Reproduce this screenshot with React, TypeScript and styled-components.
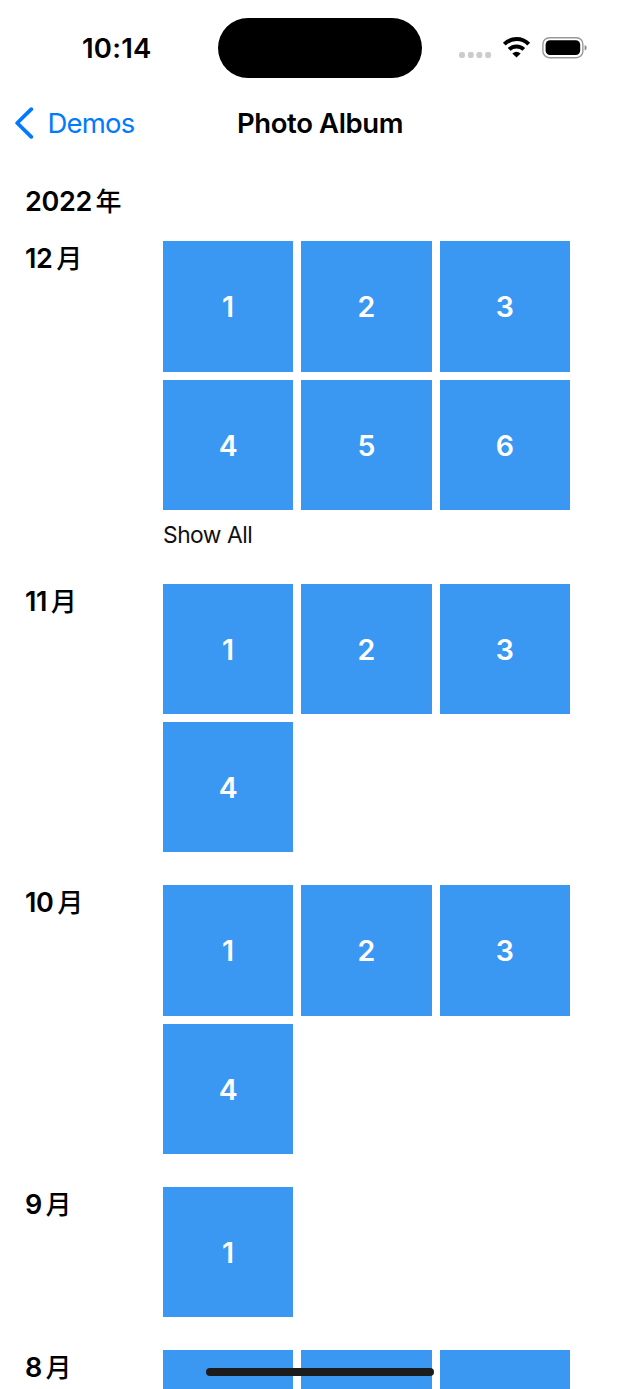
import React from "react";
import styled, { createGlobalStyle } from "styled-components";

const GlobalStyle = createGlobalStyle`
  * { box-sizing: border-box; }
  html, body { margin: 0; background: #fff; overflow: hidden; }
  body {
    font-family: Inter, "Noto Sans CJK SC", sans-serif;
    color: #000;
  }
`;

const Screen = styled.div`
  position: relative;
  width: 640px;
  height: 1389px;
  overflow: hidden;
  background: #fff;
`;

const StatusBar = styled.header`
  display: grid;
  grid-template-columns: 218px 204px 218px;
  height: 96px;
`;

const Clock = styled.div`
  padding: 31px 0 0 82px;
  font-size: 27.5px;
  line-height: 34px;
  font-weight: 600;
  letter-spacing: 0.2px;
`;

const Island = styled.div`
  margin-top: 18px;
  height: 60px;
  border-radius: 30px;
  background: #000;
`;

const Indicators = styled.div`
  display: flex;
  align-items: flex-start;
  padding: 34px 0 0 32px;
`;

const NavBar = styled.nav`
  display: grid;
  grid-template-columns: 190px 260px 190px;
  align-items: center;
  height: 54px;
  line-height: 34px;
`;

const BackButton = styled.button`
  display: flex;
  align-items: center;
  gap: 13.5px;
  padding: 0 0 0 14px;
  border: 0;
  background: none;
  color: #007aff;
  font: 400 27.5px/34px Inter, sans-serif;
  letter-spacing: -0.8px;
`;

const Title = styled.h1`
  margin: 0;
  text-align: center;
  font-size: 27.5px;
  line-height: 34px;
  font-weight: 600;
  letter-spacing: -0.4px;
`;

const Album = styled.main`
  padding: 33.5px 0 0 25px;
`;

const Label = styled.h2`
  display: flex;
  gap: 3.5px;
  margin: 0;
  font-size: 27px;
  line-height: 35px;
  font-weight: 600;
  letter-spacing: -0.3px;
`;

const Unit = styled.span`
  margin-top: -2px;
  font-family: "Noto Sans CJK SC", sans-serif;
  font-weight: 500;
  font-size: 26px;
  letter-spacing: 0;
`;

const MonthList = styled.div`
  display: flex;
  flex-direction: column;
  gap: 32.8px;
  margin-top: 22.8px;
`;

const MonthRow = styled.section`
  display: grid;
  grid-template-columns: 138px 407px;
`;

const Tiles = styled.div`
  display: grid;
  grid-template-columns: repeat(3, 130.25px);
  grid-auto-rows: 130.3px;
  gap: 8.2px 8.14px;
`;

const Tile = styled.div`
  display: flex;
  align-items: center;
  justify-content: center;
  padding-top: 1px;
  background: #3a98f3;
  color: #fff;
  font-size: 28.5px;
  font-weight: 600;
`;

const ShowAll = styled.button`
  display: block;
  height: 40.8px;
  padding: 9px 0 0;
  border: 0;
  background: none;
  color: #111;
  font: 400 22.8px/32px Inter, sans-serif;
  letter-spacing: -0.5px;
`;

const HomeIndicator = styled.div`
  position: absolute;
  left: 206px;
  top: 1368px;
  width: 228px;
  height: 8px;
  border-radius: 4px;
  background: #1c1c1c;
`;

const months = [
  { month: 12, count: 6, more: true },
  { month: 11, count: 4 },
  { month: 10, count: 4 },
  { month: 9, count: 1 },
  { month: 8, count: 3 },
];

function StatusIcons() {
  return (
    <svg width="134" height="28" viewBox="0 0 134 28">
      <g fill="#cccccc">
        <rect x="5" y="18" width="6" height="6" rx="2.2" />
        <rect x="13.8" y="18" width="6" height="6" rx="2.2" />
        <rect x="22.4" y="18" width="6" height="6" rx="2.2" />
        <rect x="31.1" y="18" width="6" height="6" rx="2.2" />
      </g>
      <g fill="none" stroke="#000" strokeWidth="4">
        <path d="M50.3 10.1A17.4 17.4 0 0 1 74.7 10.1" />
        <path d="M55.2 15.4A10.5 10.5 0 0 1 69.8 15.4" />
      </g>
      <path d="M62.5 23.6L58.3 19.5Q62.5 15.8 66.7 19.5Z" />
      <rect x="88.9" y="3.7" width="40" height="20" rx="6.5" fill="none" stroke="#999" strokeWidth="1.4" />
      <rect x="91.6" y="6.3" width="34.6" height="14.8" rx="4.5" />
      <path d="M130.6 10.9Q132.7 11.7 132.7 13.7Q132.7 15.7 130.6 16.5Z" fill="#888" />
    </svg>
  );
}

export default function App() {
  return (
    <Screen>
      <GlobalStyle />
      <StatusBar>
        <Clock>10:14</Clock>
        <Island />
        <Indicators>
          <StatusIcons />
        </Indicators>
      </StatusBar>
      <NavBar>
        <BackButton>
          <svg width="20" height="32" viewBox="0 0 20 32">
            <path
              d="M17.3 2.2L3.2 16L17.3 29.8"
              fill="none"
              stroke="#007aff"
              strokeWidth="3.8"
              strokeLinecap="round"
              strokeLinejoin="round"
            />
          </svg>
          Demos
        </BackButton>
        <Title>Photo Album</Title>
      </NavBar>
      <Album>
        <Label>
          2022<Unit>年</Unit>
        </Label>
        <MonthList>
          {months.map(({ month, count, more }) => (
            <MonthRow key={month}>
              <Label>
                {month}
                <Unit>月</Unit>
              </Label>
              <div>
                <Tiles>
                  {Array.from({ length: count }, (_, i) => (
                    <Tile key={i}>{month === 8 ? null : i + 1}</Tile>
                  ))}
                </Tiles>
                {more && <ShowAll>Show All</ShowAll>}
              </div>
            </MonthRow>
          ))}
        </MonthList>
      </Album>
      <HomeIndicator />
    </Screen>
  );
}
